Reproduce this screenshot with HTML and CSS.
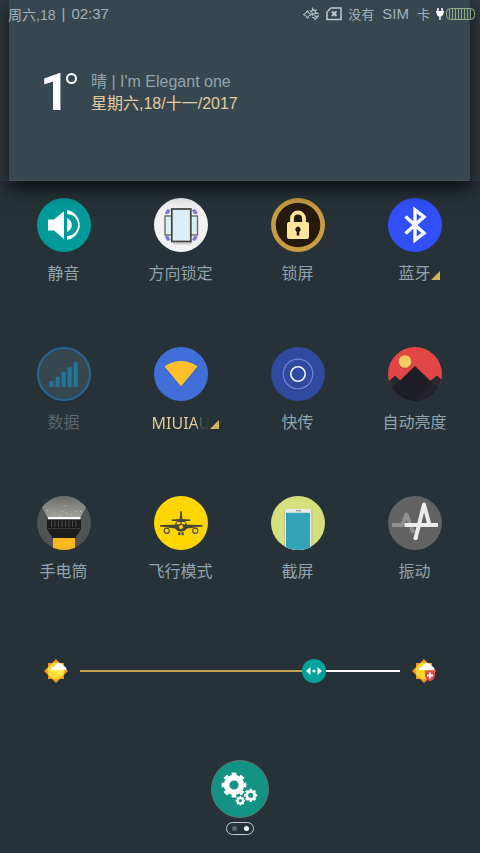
FILE: index.html
```html
<!DOCTYPE html>
<html lang="zh-CN">
<head>
  <meta charset="UTF-8">
  <meta name="viewport" content="width=device-width, initial-scale=1.0">
  <title>控制中心</title>
  <link rel="stylesheet" href="styles.css">
</head>
<body>
  <header class="top">
    <div class="status">
      <span class="status-date">周六,18</span>
      <span class="status-sep">|</span>
      <span class="status-time">02:37</span>
      <div class="status-right">
        <svg class="spark" width="16" height="14" viewBox="0 0 16 14" fill="none" stroke="#b0bec5" stroke-width="1.200">
          <path d="M4.500 3.500 Q5 6.500 8.500 7.500 Q5 8.500 4.500 11.500 Q3.500 8.500 .500 7.500 Q3.500 6.500 4.500 3.500Z"/>
          <path d="M9.500 1.500 L11 3.500 L13 3 L12 5 L13.500 6.500 L11 6.500 L9.500 8 L9 5.500 L7.500 4 L9.500 3.500Z"/>
          <path d="M11.500 8 L12.500 9.500 L15.500 9 L13.500 11 L12 12.500 L11 10.500 L9 10.500"/>
          <path d="M13.500 5.500 L15.500 7"/>
        </svg>
        <svg class="nosim" width="16" height="14" viewBox="0 0 16 14" fill="none" stroke="#c0cbd0" stroke-width="1.500">
          <path d="M5 1 H15 V12.500 H1 V5Z"/>
          <path d="M6 4.500 L10.500 9 M10.500 4.500 L6 9" stroke-width="1.800"/>
        </svg>
        <span class="carrier">没有</span>
        <span class="carrier-sim">SIM</span>
        <span class="carrier">卡</span>
        <svg class="plug" width="10" height="14" viewBox="0 0 10 14" fill="#fff">
          <path d="M2.200 1 h1.500 v3 h2.600 v-3 h1.500 v3 H9 v1.300 H8.500 C8.500 8 7.500 9.300 5.700 9.600 V13 H4.300 V9.600 C2.500 9.300 1.500 8 1.500 5.300 H1 V4 H2.200Z"/>
        </svg>
        <svg class="battery" width="29" height="12" viewBox="0 0 29 12" fill="none" stroke="#8fae86">
          <rect x=".500" y=".500" width="28" height="11" rx="4"/>
          <path d="M3.500 1 V11 M6.500 1 V11 M9.500 1 V11 M12.500 1 V11 M15.500 1 V11 M18.500 1 V11 M21.500 1 V11 M24.500 1 V11"/>
        </svg>
      </div>
    </div>
    <section class="weather">
      <div class="temp">1<span class="deg"></span></div>
      <div class="info">
        <div class="sky">晴 | I'm Elegant one</div>
        <div class="date">星期六,18/十一/2017</div>
      </div>
    </section>
  </header>

  <main>
    <div class="tiles">
      <button class="tile">
        <svg class="icon" viewBox="0 0 54 54">
          <circle cx="27" cy="27" r="27" fill="#009a98"/>
          <g fill="#fff">
            <path d="M11 21.500 H17 L27 13 V41 L17 32.500 H11Z"/>
            <path d="M30 20 A7.500 7.500 0 0 1 30 34Z"/>
            <path d="M30 12 A15.200 15.200 0 0 1 30 42 V38 A11 11 0 0 0 30 16Z"/>
          </g>
        </svg>
        <span class="label">静音</span>
      </button>

      <button class="tile">
        <svg class="icon" viewBox="0 0 54 54">
          <circle cx="27" cy="27" r="27" fill="#f3f3f3"/>
          <path d="M19 45.500 H36 L38 44" stroke="#ccc" stroke-width="2" fill="none"/>
          <g fill="#7b78e0">
            <path d="M11 14.500 L13.500 11 L16.500 12 L15 15.500 L12 16.500Z"/>
            <path d="M43.500 14.500 L41 11 L38 12 L39.500 15.500 L42.500 16.500Z"/>
            <path d="M11 39.500 L13.500 43 L16.500 42 L15 38.500 L12 37.500Z"/>
            <path d="M43.500 39.500 L41 43 L38 42 L39.500 38.500 L42.500 37.500Z"/>
          </g>
          <g fill="#dceef3" stroke="#6a6a68" stroke-width="1.400">
            <rect x="11" y="18" width="8" height="19"/>
            <rect x="35.500" y="18" width="8" height="19"/>
          </g>
          <rect x="17.800" y="11" width="19" height="32.500" fill="#dceff5" stroke="#41413d" stroke-width="1.700"/>
        </svg>
        <span class="label">方向锁定</span>
      </button>

      <button class="tile">
        <svg class="icon" viewBox="0 0 54 54">
          <circle cx="27" cy="27" r="27" fill="#c89d40"/>
          <circle cx="27" cy="27" r="22.300" fill="#251a0c"/>
          <path d="M21 25 V20.500 A6 6 0 0 1 33 20.500 V25" fill="none" stroke="#ffe69c" stroke-width="3.800"/>
          <rect x="16" y="24" width="22" height="17" rx="2" fill="#ffe69c"/>
          <path d="M27 28.500 A3 3 0 0 1 28.300 34 V37.500 H25.700 V34 A3 3 0 0 1 27 28.500Z" fill="#251a0c"/>
        </svg>
        <span class="label">锁屏</span>
      </button>

      <button class="tile">
        <svg class="icon" viewBox="0 0 54 54">
          <circle cx="27" cy="27" r="27" fill="#3150fb"/>
          <path d="M17.500 18.500 L36 35.200 L27 42 V12 L36 18.800 L17.500 35.500" fill="none" stroke="#fff" stroke-width="3.400"/>
        </svg>
        <span class="label more">蓝牙</span>
      </button>

      <button class="tile off">
        <svg class="icon" viewBox="0 0 54 54">
          <circle cx="27" cy="27" r="26" fill="#37474f" stroke="#27659a" stroke-width="2"/>
          <path d="M12.500 34 h4.200 v6 h-4.200Z M18.600 29.700 h4.200 V40 h-4.200Z M24.600 24.700 h4.200 V40 h-4.200Z M30.600 20.300 h4.200 V40 h-4.200Z M36.600 15.300 h4.200 V40 h-4.200Z" fill="#22759a"/>
        </svg>
        <span class="label">数据</span>
      </button>

      <button class="tile">
        <svg class="icon" viewBox="0 0 54 54">
          <circle cx="27" cy="27" r="27" fill="#406fda"/>
          <path d="M27 41 L10.500 21 L27 27 L43.500 21Z" fill="#3a62c0"/>
          <path d="M27 39.500 L10.500 19.500 Q18 14 27 14 Q36 14 43.500 19.500Z" fill="#ffc02c"/>
        </svg>
        <span class="label more"><span class="wifi-name">MIUIAU</span></span>
      </button>

      <button class="tile">
        <svg class="icon" viewBox="0 0 54 54">
          <circle cx="27" cy="27" r="27" fill="#304a9f"/>
          <circle cx="27" cy="28.500" r="15.500" fill="#2b4291"/>
          <circle cx="27" cy="27" r="14.800" fill="#304a9f" stroke="#7187d8" stroke-width="1.200"/>
          <circle cx="27" cy="27" r="7.200" fill="none" stroke="#f0f2ff" stroke-width="1.600"/>
        </svg>
        <span class="label">快传</span>
      </button>

      <button class="tile">
        <svg class="icon" viewBox="0 0 54 54">
          <clipPath id="disc"><circle cx="27" cy="27" r="27"/></clipPath>
          <g clip-path="url(#disc)">
            <rect width="54" height="54" fill="#e24646"/>
            <circle cx="17" cy="16" r="6.500" fill="#ca4040"/>
            <circle cx="17" cy="14.500" r="6.300" fill="#f1cc63"/>
            <path d="M0 35 L7 28.500 L16 37 L38 37 L49 28.500 L54 33 V54 H0Z" fill="#2a2731"/>
            <path d="M27 19 L54 45 V54 H0 V45Z" fill="#1e1e27"/>
            <path d="M44 35.500 L54 45 V54 H27Z" fill="#24232c"/>
          </g>
        </svg>
        <span class="label">自动亮度</span>
      </button>

      <button class="tile">
        <svg class="icon" viewBox="0 0 54 54">
          <linearGradient id="beam" x1="0" y1="0" x2="0" y2="1">
            <stop offset="0" stop-color="#6b6c69"/>
            <stop offset="1" stop-color="#a5a49e"/>
          </linearGradient>
          <g clip-path="url(#disc)">
            <rect width="54" height="54" fill="#505452"/>
            <path d="M-1 0 H55 L43 22 H11Z" fill="url(#beam)"/>
            <path d="M10 14h1v1h-1z M17 17h1v1h-1z M22 19h1v1h-1z M25 15h1v1h-1z M29 17h1v1h-1z M34 18h1v1h-1z M38 15h1v1h-1z M43 15h1v1h-1z M28 9h1v1h-1z" fill="#c8c8c4"/>
            <path d="M10 23.500 H44 V33 L38.500 42 H15.500 L10 33Z" fill="#1c1c1c"/>
            <path d="M14.500 24.500 V31 M18 24.500 V31 M21.500 24.500 V31 M25 24.500 V31 M28.500 24.500 V31 M32 24.500 V31 M35.500 24.500 V31 M39 24.500 V31" stroke="#4a4a4a"/>
            <path d="M11 32.500 H43" stroke="#3c3c3c"/>
            <rect x="11" y="21" width="32.500" height="2.200" fill="#fff"/>
            <rect x="16" y="42" width="22" height="12" fill="#fbb71f"/>
          </g>
        </svg>
        <span class="label">手电筒</span>
      </button>

      <button class="tile">
        <svg class="icon" viewBox="0 0 54 54">
          <circle cx="27" cy="27" r="27" fill="#ffd600"/>
          <g fill="#4a4733">
            <path d="M26.300 15 H27.700 L28.300 23 L36.500 23.500 V24.800 L31 25.200 L33.500 28.700 L48.500 29 V30.500 L33 32.500 Q31 35.500 27 35.800 Q23 35.500 21 32.500 L6 30.500 V29 L20.500 28.700 L23 25.200 L17.500 24.800 V23.500 L25.700 23Z"/>
            <path d="M24.300 36.300 h2.200 v3 h-2.200Z M27.500 36.300 h2.200 v3 h-2.200Z"/>
          </g>
          <path d="M23.300 26 h3 v2.200 h-4.200Z M27.700 26 h3 l1.200 2.200 h-4.200Z" fill="#ffd600"/>
          <circle cx="27" cy="31" r="2" fill="#ffd600"/>
          <g fill="none" stroke="#4a4733" stroke-width="1.100">
            <circle cx="12.700" cy="34.800" r="2.600"/>
            <circle cx="41.300" cy="34.800" r="2.600"/>
          </g>
        </svg>
        <span class="label">飞行模式</span>
      </button>

      <button class="tile">
        <svg class="icon" viewBox="0 0 54 54">
          <g clip-path="url(#disc)">
            <rect width="54" height="54" fill="#d5df7e"/>
            <rect x="13" y="14" width="28.500" height="42" rx="2" fill="#b9c27a"/>
            <rect x="13.800" y="13" width="26.600" height="43" rx="2" fill="#e9e9e6"/>
            <rect x="15" y="16.800" width="24" height="40" fill="#30a3b9"/>
            <rect x="25" y="14.300" width="5" height="1" fill="#888"/>
          </g>
        </svg>
        <span class="label">截屏</span>
      </button>

      <button class="tile">
        <svg class="icon" viewBox="0 0 54 54">
          <circle cx="27" cy="27" r="27" fill="#626262"/>
          <path d="M4 29 H14 L18.500 18.500 L25.500 37" fill="none" stroke="#8f8f8f" stroke-width="4" stroke-linejoin="round"/>
          <path d="M27.500 42.500 L36 8.500 L41.500 29 M16.500 29 H50" fill="none" stroke="#ececec" stroke-width="4" stroke-linejoin="round"/>
          <circle cx="27.500" cy="42.300" r="2" fill="#ececec"/>
        </svg>
        <span class="label">振动</span>
      </button>
    </div>

    <div class="brightness">
      <svg class="sun" viewBox="0 0 24 24">
        <path d="M4 4 H20 V20 H4Z M12 0 L24 12 L12 24 L0 12Z" fill="#ee951f"/>
        <circle cx="12" cy="12" r="8.500" fill="#fbd92f"/>
        <path d="M4 11 H20 A8.500 8.500 0 0 1 18 17Z" fill="#ffe94e"/>
        <path d="M8 11 Q6 10.500 7.500 8.700 Q9 7.500 10.500 7.500 Q12 4 15 4 Q18.500 4 19.500 7 Q22.500 7.500 22.500 11Z" fill="#fff"/>
      </svg>
      <input type="range" class="slider" min="0" max="100" value="75" aria-label="亮度">
      <svg class="sun" viewBox="0 0 24 24">
        <path d="M4 4 H20 V20 H4Z M12 0 L24 12 L12 24 L0 12Z" fill="#ee951f"/>
        <circle cx="12" cy="12" r="8.500" fill="#fdd42a"/>
        <path d="M8 11 Q6 10.500 7.500 8.700 Q9 7.500 10.500 7.500 Q12 4 15 4 Q18.500 4 19.500 7 Q22.500 7.500 22.500 11Z" fill="#fff"/>
        <path d="M13 11.500 Q16 12 18 11 Q20 12 23 11.500 V17 Q22 21 18 22.500 Q14 21 13 17Z" fill="#e04b4b"/>
        <path d="M18 13.500 V19.500 M15 16.500 H21" stroke="#fff" stroke-width="1.800"/>
      </svg>
    </div>
  </main>

  <footer class="bottom">
    <button class="settings" aria-label="设置">
      <svg viewBox="0 0 58 58" fill="none" stroke="#fff">
        <circle cx="29" cy="29" r="28.500" fill="#129383" stroke="#5d7673" stroke-width="1"/>
        <circle cx="23" cy="25" r="7.400" stroke-width="5.600"/>
        <circle cx="23" cy="25" r="10.800" stroke-width="3.200" pathLength="16" stroke-dasharray="1.100 .900" stroke-dashoffset=".550"/>
        <circle cx="39.700" cy="35.300" r="4" stroke-width="2.900"/>
        <circle cx="39.700" cy="35.300" r="5.700" stroke-width="1.900" pathLength="16" stroke-dasharray="1.100 .900" stroke-dashoffset=".550"/>
        <circle cx="29.300" cy="40.700" r="2.700" stroke-width="2.200"/>
        <circle cx="29.300" cy="40.700" r="4" stroke-width="1.400" pathLength="16" stroke-dasharray="1.100 .900" stroke-dashoffset=".550"/>
      </svg>
    </button>
    <div class="pager">
      <span class="dot"></span>
      <span class="dot active"></span>
    </div>
  </footer>
</body>
</html>
```

FILE: styles.css
```css
* {
  box-sizing: border-box;
}
body {
  margin: 0;
  min-height: 100vh;
  background-color: #273238;
  color: #90a4ae;
  font-family: "Liberation Sans", "Noto Sans CJK SC", sans-serif;
  font-size: 16px;
}
button {
  border: none;
  padding: 0;
  background: none;
  color: inherit;
  font: inherit;
  cursor: pointer;
}
svg {
  display: block;
}

/* status bar + weather card */
.top {
  position: relative;
  padding: 0 10px 0 9px;
  background-color: #303d44;
}
.status {
  position: absolute;
  top: 0;
  left: 0;
  right: 0;
  display: flex;
  align-items: center;
  height: 27px;
  padding: 0 5px 0 8px;
  color: #a3b3bb;
  font-size: 15px;
}
.status-date {
  font-size: 14px;
}
.status-sep {
  margin: 0 6px;
}
.status-right {
  display: flex;
  align-items: center;
  margin-left: auto;
}
.spark {
  margin-right: 7px;
}
.nosim {
  margin-right: 6px;
}
.carrier {
  font-size: 13px;
}
.carrier-sim {
  margin: 0 8px;
}
.plug {
  margin-left: 5px;
  margin-right: 1px;
}
.weather {
  display: flex;
  align-items: center;
  height: 181px;
  padding: 5px 31px 0;
  background-color: #37474f;
  border-bottom: 1px solid #43545c;
  box-shadow: 0 6px 18px 2px rgba(0, 0, 0, 0.7);
}
.temp {
  display: flex;
  align-items: flex-start;
  width: 51px;
  color: #fff;
  font-family: Roboto, sans-serif;
  font-size: 52px;
  font-weight: bold;
  line-height: 52px;
}
.deg {
  flex: none;
  width: 11px;
  height: 11px;
  margin-top: 6px;
  margin-left: -4px;
  border: 2px solid #fff;
  border-radius: 50%;
}
.info {
  line-height: 22px;
}
.date {
  color: #e3cb9f;
}

/* toggles */
.tiles {
  display: grid;
  grid-template-columns: repeat(4, 1fr);
  row-gap: 61px;
  padding: 17px 7px 0 5px;
}
.tile {
  display: flex;
  flex-direction: column;
  align-items: center;
  gap: 10px;
}
.icon {
  width: 54px;
  height: 54px;
}
.label {
  position: relative;
  height: 24px;
  line-height: 24px;
  white-space: nowrap;
}
.off .label {
  color: #58676e;
}
/* corner mark for tiles that open a list */
.more::after {
  content: "";
  position: absolute;
  left: 100%;
  bottom: 6px;
  border-left: 9px solid transparent;
  border-bottom: 9px solid #d3b658;
}
.wifi-name {
  display: block;
  width: 58px;
  overflow: hidden;
  text-align: left;
  font-family: "Noto Sans", sans-serif;
  background: linear-gradient(to right, #e3cb9f 75%, #4a5254 85%, #273238);
  -webkit-background-clip: text;
  background-clip: text;
  color: transparent;
}

/* brightness */
.brightness {
  display: flex;
  align-items: center;
  gap: 12px;
  margin-top: 75px;
  padding: 0 44px;
}
.sun {
  flex: none;
  width: 24px;
  height: 24px;
}
.slider {
  flex: 1;
  min-width: 0;
  height: 24px;
  margin: 0;
  -webkit-appearance: none;
  appearance: none;
  background: linear-gradient(to right, #c3a44f 74%, #fff 74%) center / 100% 2px no-repeat;
}
.slider::-webkit-slider-thumb {
  -webkit-appearance: none;
  width: 24px;
  height: 24px;
  border-radius: 50%;
  background: #00a29b url("data:image/svg+xml,%3Csvg xmlns='http://www.w3.org/2000/svg' viewBox='0 0 24 24' fill='white'%3E%3Cpath d='M4 12 L8.500 8 V16Z M20 12 L15.500 8 V16Z'/%3E%3Ccircle cx='12' cy='12' r='1.600'/%3E%3C/svg%3E") center / 24px 24px no-repeat;
}

/* settings button and page dots */
.bottom {
  display: flex;
  flex-direction: column;
  align-items: center;
  gap: 4px;
  padding: 77px 0 18px;
}
.settings {
  width: 58px;
  height: 58px;
}
.pager {
  display: flex;
  align-items: center;
  justify-content: center;
  gap: 7px;
  width: 28px;
  height: 13px;
  border: 1px solid #c5cdd0;
  border-radius: 7px;
}
.dot {
  width: 5px;
  height: 5px;
  border-radius: 50%;
  background-color: #5b686e;
}
.dot.active {
  background-color: #fff;
}
```
